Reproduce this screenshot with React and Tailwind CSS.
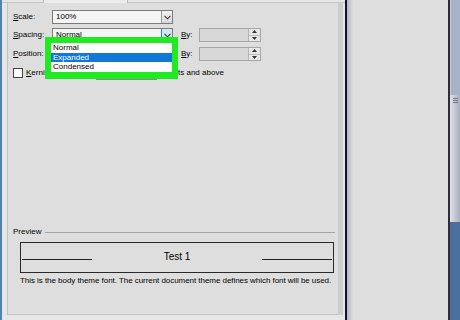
import React from "react";

const Chevron = () => (
  <svg width="7" height="5" viewBox="0 0 7 5" className="block">
    <path d="M0.5 0.8 L3.5 3.8 L6.5 0.8" fill="none" stroke="#333" strokeWidth="1.1" />
  </svg>
);

const Combo = ({ text, width, hot }) => (
  <div
    className={`h-[14px] flex border border-[#7c7c7c] bg-[#f4f4f4] ${width}`}
  >
    <div className="flex-1 pl-[3px] text-[8px] leading-[12px] text-black">{text}</div>
    <div
      className={`w-[11px] h-full flex items-center justify-center border-l ${
        hot
          ? "border-[#3c7fb1] bg-[#cfe6f7]"
          : "border-[#9a9a9a] bg-linear-to-b from-[#f2f2f2] to-[#d8d8d8]"
      }`}
    >
      <Chevron />
    </div>
  </div>
);

const Spinner = () => (
  <div className="w-[62px] h-[14px] flex border border-[#a6a6a6] bg-[#d8d8d8]">
    <div className="flex-1" />
    <div className="w-[12px] h-full flex flex-col border-l border-[#b4b4b4] bg-[#e8e8e8]">
      <div className="flex-1 flex items-center justify-center border-b border-[#bdbdbd]">
        <svg width="5" height="3" viewBox="0 0 5 3"><path d="M0 3 L2.5 0 L5 3 Z" fill="#333" /></svg>
      </div>
      <div className="flex-1 flex items-center justify-center">
        <svg width="5" height="3" viewBox="0 0 5 3"><path d="M0 0 L2.5 3 L5 0 Z" fill="#333" /></svg>
      </div>
    </div>
  </div>
);

const Label = ({ u, rest, w }) => (
  <div className={`text-[8px] leading-[12px] text-black whitespace-nowrap ${w}`}>
    <span className="underline">{u}</span>
    {rest}
  </div>
);

export default function App() {
  return (
    <div
      className="w-[460px] h-[320px] flex overflow-hidden bg-[#dedede]"
      style={{ fontFamily: '"Liberation Sans", Arial, sans-serif' }}
    >
      {/* left blue edge */}
      <div className="w-[2px] bg-[#5680b4]" />

      {/* dialog column */}
      <div className="w-[343px] flex flex-col bg-[#e6e6e6]">
        <div className="h-[3px] flex">
          <div className="w-[41px] border-b border-[#c6c6c6]" />
          <div className="w-[85px] border-l border-r border-[#b8b8b8] bg-[#ececec]" />
          <div className="flex-1 border-b border-[#c6c6c6]" />
        </div>
        <div className="flex pl-[5px]">
          <div className="relative w-[331px] h-[312px] flex flex-col bg-[#dedede] border-l border-b border-[#c2c2c2] pl-[5px] pt-[7px]">
            {/* Scale */}
            <div className="flex items-center">
              <Label u="S" rest="cale:" w="w-[39px]" />
              <Combo text="100%" width="w-[121px]" />
            </div>
            {/* Spacing */}
            <div className="flex items-center mt-[4px]">
              <Label u="S" rest="pacing:" w="w-[39px]" />
              <Combo text="Normal" width="w-[121px]" hot />
              <Label u="B" rest="y:" w="w-[18px] ml-[8px]" />
              <Spinner />
            </div>
            {/* Position */}
            <div className="flex items-center mt-[5px]">
              <Label u="P" rest="osition:" w="w-[39px]" />
              <Combo text="" width="w-[121px]" />
              <Label u="B" rest="y:" w="w-[18px] ml-[8px]" />
              <Spinner />
            </div>
            {/* Kerning */}
            <div className="flex items-center mt-[5px]">
              <div className="w-[10px] h-[10px] border border-[#444] bg-white" />
              <Label u="K" rest="erning for fonts:" w="ml-[3px] w-[70px]" />
              <div className="w-[61px] h-[14px] border border-[#8a8a8a] bg-[#f4f4f4]" />
              <div className="ml-[5px] text-[8px] leading-[12px] text-black">Points and above</div>
            </div>

            {/* Preview */}
            <div className="mt-auto pb-[28px] pr-[3px]">
              <div className="flex items-center h-[10px]">
                <div className="text-[8px] leading-[10px] text-black">Preview</div>
                <div className="flex-1 h-px bg-[#a4a4a4] ml-[4px]" />
              </div>
              <div className="ml-[7px] mt-[5px] w-[314px] h-[31px] border border-[#2a2a2a] flex items-baseline pt-[8px]">
                <div className="w-[70px] ml-px border-b border-[#222]" />
                <div className="flex-1 text-center text-[10px] leading-[12px] text-black">Test 1</div>
                <div className="w-[70px] mr-px border-b border-[#222]" />
              </div>
              <div className="ml-[7px] mt-[3px] text-[8px] leading-[10px] text-black whitespace-nowrap tracking-[-0.05px]">
                This is the body theme font. The current document theme defines which font will be used.
              </div>
            </div>

            {/* dropdown overlay */}
            <div className="absolute left-[37px] top-[34px] w-[133px] h-[42px] bg-[#22ea22] pt-[6px] px-[6px]">
              <div className="bg-white flex flex-col text-[8px] text-black">
                <div className="h-[10px] leading-[10px] pl-[2px]">Normal</div>
                <div className="h-[9px] leading-[9px] pl-[2px] bg-[#0f78d8] text-white">Expanded</div>
                <div className="h-[10px] leading-[10px] pl-[2px]">Condensed</div>
              </div>
            </div>
          </div>
          <div className="w-[5px] bg-[#cdcdcd]" />
          <div className="w-[2px] bg-[#e4e4e4]" />
        </div>
      </div>

      {/* navy divider */}
      <div className="w-[2px] bg-[#10103a]" />
      {/* shadow */}
      <div className="w-[6px] bg-linear-to-r from-[#b4b4b8] to-[#dedede]" />
      <div className="flex-1 bg-[#dedede]" />
      <div className="w-[2px] bg-[#2c2c3c]" />

      {/* scrollbar */}
      <div className="w-[10px] flex flex-col">
        <div className="h-[95px] bg-[#a9b1c5] border-l border-[#c8ccd8]" />
        <div className="h-[127px] bg-linear-to-r from-[#e2e2e4] to-[#a6aec2] flex flex-col items-center pt-[3px]">
          <div className="w-[5px] h-px bg-[#777]" />
          <div className="w-[5px] h-px bg-[#777] mt-px" />
          <div className="w-[5px] h-px bg-[#777] mt-px" />
        </div>
        <div className="flex-1 bg-[#4c6e9d]" />
      </div>
    </div>
  );
}
